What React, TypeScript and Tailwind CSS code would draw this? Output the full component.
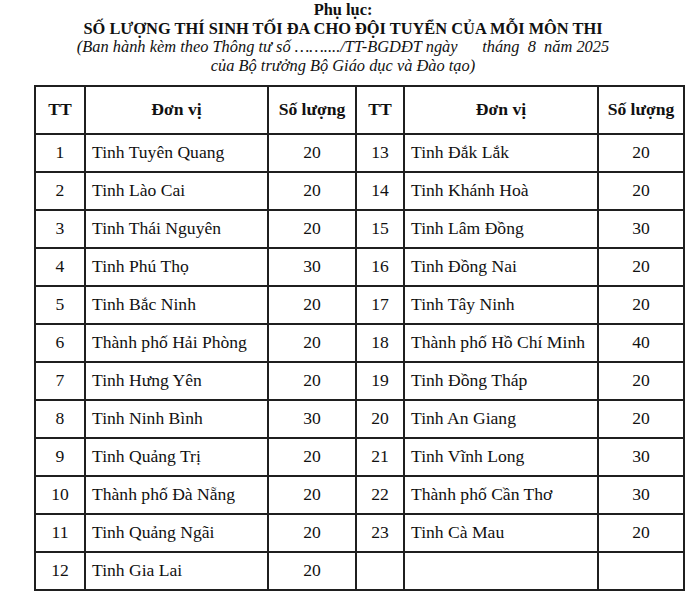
import React from "react";

const left: [string, string, string][] = [
  ["1", "Tinh Tuyên Quang", "20"],
  ["2", "Tinh Lào Cai", "20"],
  ["3", "Tinh Thái Nguyên", "20"],
  ["4", "Tinh Phú Thọ", "30"],
  ["5", "Tinh Bắc Ninh", "20"],
  ["6", "Thành phố Hải Phòng", "20"],
  ["7", "Tinh Hưng Yên", "20"],
  ["8", "Tinh Ninh Bình", "30"],
  ["9", "Tinh Quảng Trị", "20"],
  ["10", "Thành phố Đà Nẵng", "20"],
  ["11", "Tinh Quảng Ngãi", "20"],
  ["12", "Tinh Gia Lai", "20"],
];

const right: [string, string, string][] = [
  ["13", "Tinh Đắk Lắk", "20"],
  ["14", "Tinh Khánh Hoà", "20"],
  ["15", "Tinh Lâm Đồng", "30"],
  ["16", "Tinh Đồng Nai", "20"],
  ["17", "Tinh Tây Ninh", "20"],
  ["18", "Thành phố Hồ Chí Minh", "40"],
  ["19", "Tinh Đồng Tháp", "20"],
  ["20", "Tinh An Giang", "20"],
  ["21", "Tinh Vĩnh Long", "30"],
  ["22", "Thành phố Cần Thơ", "30"],
  ["23", "Tinh Cà Mau", "20"],
  ["", "", ""],
];

export default function App() {
  return (
    <div
      className="w-[700px] h-[592px] bg-white text-[#111] overflow-hidden"
      style={{ fontFamily: '"Liberation Serif", "Times New Roman", serif' }}
    >
      <div className="w-[686px] text-center text-[16.4px] leading-[18.5px] pt-[1px]">
        <div className="font-bold">Phụ lục:</div>
        <div className="font-bold">SỐ LƯỢNG THÍ SINH TỐI ĐA CHO ĐỘI TUYỂN CỦA MỖI MÔN THI</div>
        <div className="italic whitespace-pre">(Ban hành kèm theo Thông tư số ……..../TT-BGDĐT ngày      tháng  8  năm 2025</div>
        <div className="italic">của Bộ trưởng Bộ Giáo dục và Đào tạo)</div>
      </div>
      <table className="ml-[34px] mt-[10px] w-[649px] table-fixed border-collapse text-[17.6px] leading-none">
        <colgroup>
          <col className="w-[50px]" />
          <col className="w-[183px]" />
          <col className="w-[88px]" />
          <col className="w-[48px]" />
          <col className="w-[194px]" />
          <col className="w-[86px]" />
        </colgroup>
        <thead>
          <tr className="h-[48px] font-bold">
            <th className="border-2 border-[#1f1f1f] text-center">TT</th>
            <th className="border-2 border-[#1f1f1f] text-center">Đơn vị</th>
            <th className="border-2 border-[#1f1f1f] text-center">Số lượng</th>
            <th className="border-2 border-[#1f1f1f] text-center">TT</th>
            <th className="border-2 border-[#1f1f1f] text-center">Đơn vị</th>
            <th className="border-2 border-[#1f1f1f] text-center">Số lượng</th>
          </tr>
        </thead>
        <tbody>
          {left.map((l, i) => {
            const r = right[i];
            return (
              <tr key={i} className="h-[38px]">
                <td className="border-2 border-[#1f1f1f] text-center">{l[0]}</td>
                <td className="border-2 border-[#1f1f1f] pl-[6px]">{l[1]}</td>
                <td className="border-2 border-[#1f1f1f] text-center">{l[2]}</td>
                <td className="border-2 border-[#1f1f1f] text-center">{r[0]}</td>
                <td className="border-2 border-[#1f1f1f] pl-[6px]">{r[1]}</td>
                <td className="border-2 border-[#1f1f1f] text-center">{r[2]}</td>
              </tr>
            );
          })}
        </tbody>
      </table>
    </div>
  );
}
